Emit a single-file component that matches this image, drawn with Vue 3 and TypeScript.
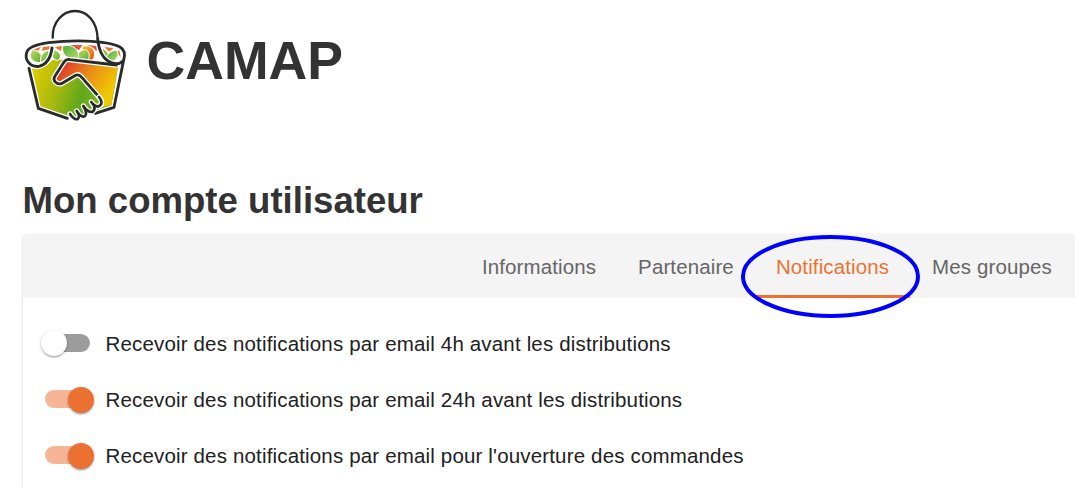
<script setup lang="ts">
import { ref } from 'vue'

interface Preference {
  label: string
  enabled: boolean
}

const tabs = [
  { id: 'infos', label: 'Informations' },
  { id: 'partner', label: 'Partenaire' },
  { id: 'notifs', label: 'Notifications' },
  { id: 'groups', label: 'Mes groupes' },
]
const activeTab = ref('notifs')

const preferences = ref<Preference[]>([
  { label: 'Recevoir des notifications par email 4h avant les distributions', enabled: false },
  { label: 'Recevoir des notifications par email 24h avant les distributions', enabled: true },
  { label: "Recevoir des notifications par email pour l'ouverture des commandes", enabled: true },
])
</script>

<template>
  <div class="page">
    <header class="brand">
      <svg class="logo" viewBox="0 0 360 390" fill="none" stroke-linecap="round" stroke-linejoin="round">
        <defs>
          <linearGradient id="bag" x1="50" y1="240" x2="250" y2="300" gradientUnits="userSpaceOnUse">
            <stop offset="0" stop-color="#dccb00" />
            <stop offset=".4" stop-color="#a5b810" />
            <stop offset=".75" stop-color="#5fa81b" />
            <stop offset="1" stop-color="#7db31a" />
          </linearGradient>
          <linearGradient id="arm" x1="145" y1="195" x2="275" y2="290" gradientUnits="userSpaceOnUse">
            <stop offset="0" stop-color="#dd3b28" />
            <stop offset=".45" stop-color="#e98a18" />
            <stop offset="1" stop-color="#efc900" />
          </linearGradient>
          <linearGradient id="leaf" x1="0" y1="0" x2="1" y2="1">
            <stop offset="0" stop-color="#c3dc6a" />
            <stop offset="1" stop-color="#55ae2e" />
          </linearGradient>
          <linearGradient id="leafDeep" x1="0" y1="0" x2="1" y2="1">
            <stop offset="0" stop-color="#4fae2c" />
            <stop offset="1" stop-color="#b7d979" />
          </linearGradient>
          <linearGradient id="fruit" x1="0" y1="0" x2="1" y2="1">
            <stop offset="0" stop-color="#f5c51c" />
            <stop offset="1" stop-color="#e64b24" />
          </linearGradient>
        </defs>
        <path fill="url(#bag)" d="M47 203Q95 205 112 180L160 178L310 195L290 318L243 332L215 345L158 354L73 321Z" />
        <path fill="url(#arm)" d="M153 183L308 199L290 315L258 322L254 295L207 233Q190 219 174 232L144 253Q125 250 124 235Z" />
        <path fill="#fff" d="M42 150Q70 135 180 130Q290 133 314 148L320 183Q285 192 260 181L150 174L106 179L74 194L44 180Z" />
        <g fill="#ec7430">
          <path d="M54 149L78 140L69 153Z" />
          <path d="M80 152L84 141L106 139L104 148Z" />
          <path d="M119 142L142 137L138 153Z" />
          <path fill="#e9563b" d="M164 135L202 135L192 151Z" />
          <path fill="#e9563b" d="M216 135L246 138L245 154L232 142Z" />
          <path d="M268 141L296 145L282 155Z" />
          <path d="M300 150L314 153L317 171Z" />
        </g>
        <g stroke="#fff" stroke-width="3">
          <path fill="url(#leaf)" d="M52 149C80 152 88 176 74 188C47 187 39 167 52 149Z" />
          <path fill="url(#leaf)" d="M77 187C74 168 82 155 102 151C101 171 96 182 77 187Z" />
          <path fill="url(#leaf)" d="M115 148C135 155 143 168 130 181C110 182 105 158 115 148Z" />
          <path fill="url(#fruit)" d="M205 138C233 133 249 159 232 181C207 183 194 154 205 138Z" />
          <path fill="url(#leaf)" d="M188 180C182 161 193 150 214 149C229 165 224 180 209 182Z" />
          <path fill="url(#leafDeep)" d="M142 139C174 128 196 151 190 178C160 182 139 165 142 139Z" />
          <path fill="url(#leaf)" d="M258 143C280 150 287 169 276 184C256 181 247 163 258 143Z" />
          <path fill="url(#leafDeep)" d="M273 185C271 163 287 151 307 151C314 172 301 188 273 185Z" />
        </g>
        <g stroke="#fff" stroke-width="16">
          <path d="M42 203L70 325L157 355" />
          <path d="M322 191L297 322L241 340" />
          <path d="M304 195L164 179Q155 176 147 186L120 228C111 240 125 255 139 251L182 226Q191 221 201 233L252 291" />
          <path d="M111 144Q105 191 72 199C46 203 28 180 35 157Q42 136 101 128C160 121 270 118 315 141Q334 152 326 180" />
          <path d="M248 118C252 158 267 180 289 188Q314 195 322 184" />
        </g>
        <g stroke="#292b2b" stroke-width="8.5">
          <path d="M42 205L70 325L157 355" />
          <path d="M304 195L164 179Q155 176 147 186L120 228C111 240 125 255 139 251L182 226Q191 221 201 233L252 291" />
          <path stroke-width="7" d="M113 113C112 66 143 33 180 33C218 33 246 66 248 116" />
          <path d="M111 144Q105 191 72 199C46 203 28 180 35 157Q42 136 101 128C160 121 270 118 315 141Q334 152 326 180L297 322L241 340" />
          <path d="M248 116C252 158 267 180 289 188Q314 195 322 184" />
        </g>
        <path stroke="#fff" stroke-width="16" d="M252 291Q267 309 253 318Q241 323 229 306Q247 327 231 336Q218 337 205 318Q219 342 209 349Q197 353 185 333Q197 350 188 357Q178 361 165 342" />
        <path stroke="#292b2b" stroke-width="8" d="M252 291Q267 309 253 318Q241 323 229 306Q247 327 231 336Q218 337 205 318Q219 342 209 349Q197 353 185 333Q197 350 188 357Q178 361 165 342" />
      </svg>
      <h1>CAMAP</h1>
    </header>

    <h2>Mon compte utilisateur</h2>

    <main class="card">
      <nav class="tabs">
        <button
          v-for="tab in tabs"
          :key="tab.id"
          type="button"
          class="tab"
          :class="[tab.id, { active: activeTab === tab.id }]"
          @click="activeTab = tab.id"
        >{{ tab.label }}</button>
      </nav>
      <div class="preferences">
        <label v-for="item in preferences" :key="item.label" class="preference">
          <input v-model="item.enabled" type="checkbox">
          <span class="switch" :class="{ on: item.enabled }"><span class="thumb"></span></span>
          <span class="text">{{ item.label }}</span>
        </label>
      </div>
    </main>

    <svg class="marker" viewBox="0 0 180 84" fill="none">
      <ellipse cx="90.5" cy="41.5" rx="87.5" ry="39.5" stroke="#00f" stroke-width="4" />
    </svg>
  </div>
</template>

<style>
body {
  margin: 0;
  background: #fff;
}
</style>

<style scoped>
.page {
  position: relative;
  box-sizing: border-box;
  width: 1075px;
  height: 487px;
  overflow: hidden;
  font-family: "Liberation Sans", Arial, sans-serif;
  color: #333;
}
.brand {
  display: flex;
  height: 130px;
  padding-left: 15px;
}
.logo {
  width: 120px;
  height: 130px;
}
h1 {
  margin: 30px 0 0 11.5px;
  font-size: 53.6px;
  line-height: 60px;
  font-weight: 700;
}
h2 {
  margin: 51px 0 0 22.5px;
  font-size: 36.6px;
  line-height: 40px;
  font-weight: 700;
}
.card {
  width: 1080px;
  height: 300px;
  margin: 13px 0 0 23px;
  border-radius: 5px;
  background: #fff;
  box-shadow: 0 1px 3px rgba(0, 0, 0, .2), 0 1px 1px rgba(0, 0, 0, .1);
}
.tabs {
  display: flex;
  height: 64px;
  padding-left: 438px;
  border-radius: 5px 0 0;
  background: #f4f4f4;
}
.tab {
  flex: none;
  padding: 5px 0 0;
  border: 0;
  border-bottom: 3px solid transparent;
  background: none;
  color: #666;
  font: 20.5px "Liberation Sans", Arial, sans-serif;
  letter-spacing: .12px;
}
.infos { width: 156px; }
.partner { width: 138px; }
.notifs { width: 155px; }
.groups { width: 164px; }
.tab.active {
  border-bottom-color: #ee7130;
  color: #ee7130;
}
.preferences {
  padding: 17px 0 0 18px;
}
.preference {
  display: flex;
  align-items: center;
  height: 56px;
  color: #212121;
  font-size: 20.5px;
  letter-spacing: .163px;
}
.preference input {
  display: none;
}
.switch {
  display: flex;
  align-items: center;
  flex: none;
  box-sizing: border-box;
  width: 45px;
  height: 18px;
  margin: 0 15.5px 0 4px;
  border-radius: 9px;
  background: #9c9c9c;
}
.thumb {
  flex: none;
  width: 26px;
  height: 26px;
  margin: 0 0 0 -4px;
  border-radius: 50%;
  background: #fff;
  box-shadow: 0 2px 2px -1px rgba(0, 0, 0, .25), 0 1px 3px rgba(0, 0, 0, .25);
}
.switch.on {
  background: #f6b597;
}
.on .thumb {
  margin: 1px 0 0 23px;
  background: #ec7030;
}
.text {
  padding-top: 2px;
  line-height: 24px;
  white-space: nowrap;
}
.marker {
  position: absolute;
  left: 740px;
  top: 235px;
  width: 180px;
  height: 84px;
  pointer-events: none;
}
</style>
